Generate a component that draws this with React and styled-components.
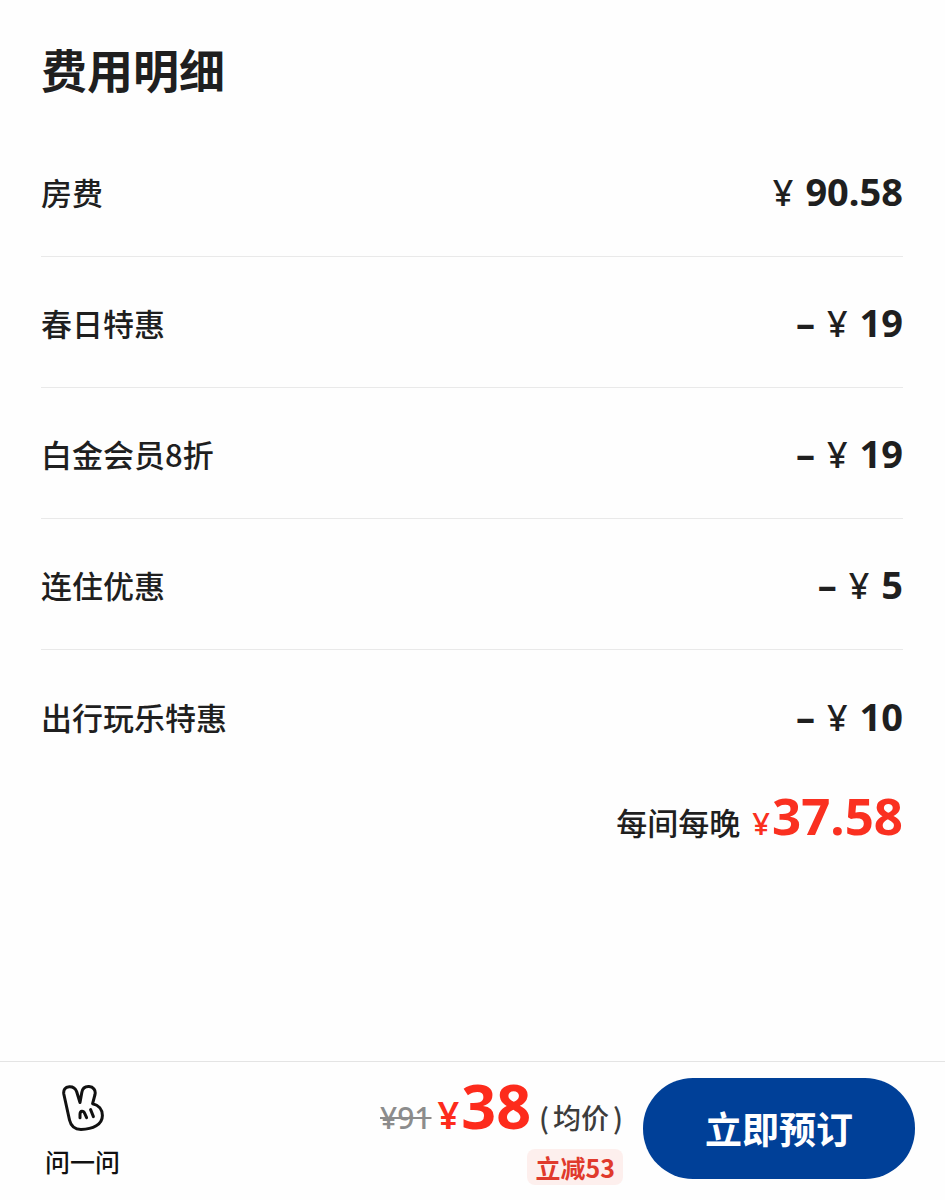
import React from 'react';
import styled, { createGlobalStyle } from 'styled-components';

const GlobalStyle = createGlobalStyle`
  * {
    box-sizing: border-box;
  }
  body {
    margin: 0;
    background: #fefefe;
    color: #1f1f1f;
    font-family: 'Noto Sans CJK SC', sans-serif;
  }
`;

const Page = styled.div`
  display: flex;
  flex-direction: column;
  min-height: 100vh;
`;

const Details = styled.main`
  flex: 1;
  padding: 34px 42px 40px 41px;
`;

const Title = styled.h1`
  margin: 0 0 24px;
  font-size: 46px;
  font-weight: 700;
  line-height: 68px;
`;

const FeeList = styled.ul`
  margin: 0;
  padding: 0;
  list-style: none;
`;

const FeeRow = styled.li`
  display: flex;
  align-items: center;
  justify-content: space-between;
  min-height: 131px;
  padding-top: 2px;
  border-bottom: 1px solid #e9e9e9;
  &:last-child {
    border-bottom: none;
  }
`;

const Label = styled.span`
  font-size: 31px;
  font-weight: 500;
  line-height: 50px;
`;

const Amount = styled.span`
  display: flex;
  align-items: baseline;
  gap: 12px;
  font-family: 'Noto Sans', 'Noto Sans CJK SC', sans-serif;
  font-size: 38px;
  font-weight: 700;
  line-height: 50px;
`;

const Yen = styled.span`
  font-size: ${(props) => props.$size}px;
  font-weight: ${(props) => props.$weight || 500};
`;

const Total = styled.div`
  display: flex;
  align-items: baseline;
  justify-content: flex-end;
`;

const TotalPrice = styled.strong`
  display: flex;
  align-items: baseline;
  gap: 2px;
  margin-left: 12px;
  color: #fa3020;
  font-family: 'Noto Sans', 'Noto Sans CJK SC', sans-serif;
  font-size: 51px;
  font-weight: 700;
  line-height: 68px;
`;

const Footer = styled.footer`
  display: flex;
  align-items: flex-start;
  padding: 16px 30px 15px 45px;
  border-top: 1px solid #e4e4e4;
`;

const AskButton = styled.button`
  display: flex;
  flex-direction: column;
  align-items: center;
  gap: 12px;
  padding: 7px 0 0;
  border: none;
  background: none;
  color: #111;
  font-family: inherit;
  font-size: 25px;
  font-weight: 500;
  line-height: 36px;
  cursor: pointer;
`;

const PriceBox = styled.div`
  display: flex;
  flex: 1;
  flex-direction: column;
  align-items: flex-end;
  padding-right: 20px;
`;

const PriceLine = styled.div`
  display: flex;
  align-items: baseline;
  height: 71px;
  line-height: 56px;
`;

const OldPrice = styled.del`
  margin-right: 6px;
  color: #8c8c8c;
  font-family: 'Noto Sans', 'Noto Sans CJK SC', sans-serif;
  font-size: 30px;
  font-weight: 500;
  text-decoration-thickness: 2px;
`;

const Price = styled.strong`
  display: flex;
  align-items: baseline;
  gap: 2px;
  color: #fd2b1c;
  font-family: 'Noto Sans', 'Noto Sans CJK SC', sans-serif;
  font-size: 61px;
  font-weight: 700;
`;

const PriceNote = styled.span`
  display: flex;
  gap: 4px;
  margin-left: 8px;
  color: #3c3c3c;
  font-size: 28px;
  font-weight: 500;
`;

const Discount = styled.span`
  padding: 0 8px;
  border-radius: 8px;
  background: #fdefed;
  color: #e03a2c;
  font-size: 25px;
  font-weight: 700;
  line-height: 36px;
`;

const BookButton = styled.button`
  padding: 0 62px;
  border: none;
  border-radius: 50px;
  background: #004098;
  color: #fff;
  font-family: inherit;
  font-size: 37px;
  font-weight: 700;
  line-height: 101px;
  cursor: pointer;
`;

const RabbitIcon = () => (
  <svg width="42" height="46" viewBox="0 0 42 46" fill="none" stroke="currentColor" strokeWidth="3" strokeLinecap="round" strokeLinejoin="round" aria-hidden="true">
    <path d="M18 17.5L14.6 6.5C13.2 3 10.6 1.6 7.2 1.8C3.2 2 1.2 5 1.8 9L7.5 35C9 41.5 13 44.4 19 44.4C31 44.4 40.4 39.5 40.4 30.5C40.4 24.5 36.5 20 30.6 18.7L33 9.5C34 5.2 31.2 1.8 27 1.6C23 1.4 20.4 3.8 19.8 7.5Z" />
    <path d="M18 32.8V29.2C18.2 25.4 21.4 25.4 22.8 28.6L24.6 32.6M28.6 24.6L31.4 31.6" />
  </svg>
);

const fees = [
  { name: '房费', amount: '90.58' },
  { name: '春日特惠', amount: '19', discount: true },
  { name: '白金会员8折', amount: '19', discount: true },
  { name: '连住优惠', amount: '5', discount: true },
  { name: '出行玩乐特惠', amount: '10', discount: true },
];

const App = () => {
  return (
    <>
      <GlobalStyle />
      <Page>
        <Details>
          <Title>费用明细</Title>
          <FeeList>
            {fees.map((fee) => (
              <FeeRow key={fee.name}>
                <Label>{fee.name}</Label>
                <Amount>
                  {fee.discount && <span>–</span>}
                  <Yen $size={36}>¥</Yen>
                  <span>{fee.amount}</span>
                </Amount>
              </FeeRow>
            ))}
          </FeeList>
          <Total>
            <Label>每间每晚</Label>
            <TotalPrice>
              <Yen $size={31}>¥</Yen>
              <span>37.58</span>
            </TotalPrice>
          </Total>
        </Details>
        <Footer>
          <AskButton type="button">
            <RabbitIcon />
            问一问
          </AskButton>
          <PriceBox>
            <PriceLine>
              <OldPrice>¥91</OldPrice>
              <Price>
                <Yen $size={38} $weight={600}>¥</Yen>
                <span>38</span>
              </Price>
              <PriceNote>
                <span>(</span>
                <span>均价</span>
                <span>)</span>
              </PriceNote>
            </PriceLine>
            <Discount>立减53</Discount>
          </PriceBox>
          <BookButton type="button">立即预订</BookButton>
        </Footer>
      </Page>
    </>
  );
};

export default App;
